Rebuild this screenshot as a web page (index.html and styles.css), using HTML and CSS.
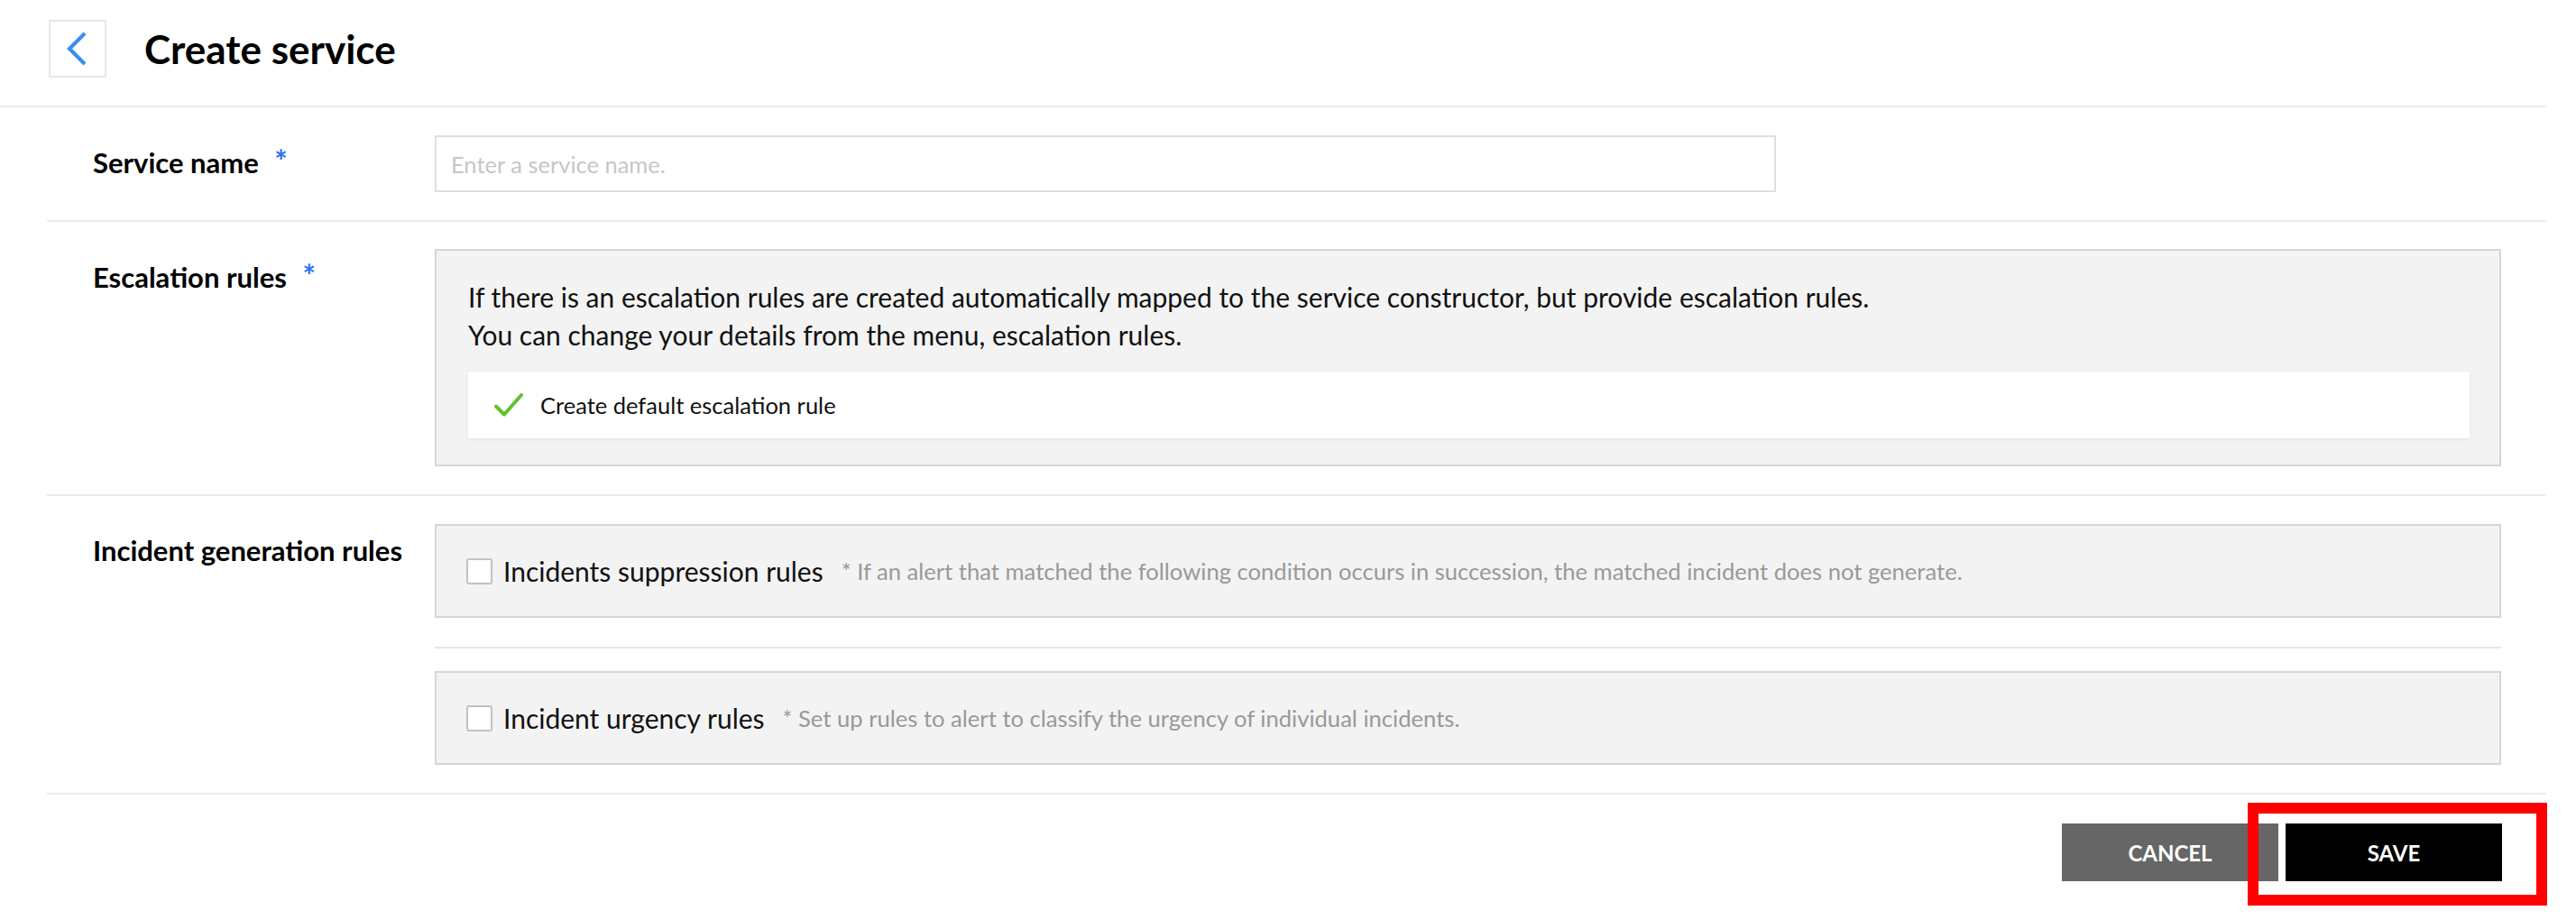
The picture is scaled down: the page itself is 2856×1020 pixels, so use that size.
FILE: index.html
```html
<!DOCTYPE html>
<html lang="en">
<head>
<meta charset="utf-8">
<title>Create service</title>
<link rel="stylesheet" href="styles.css">
</head>
<body>
<header class="topbar">
  <button class="back" type="button" aria-label="Back">
    <svg width="24" height="38" viewBox="0 0 24 38"><polyline points="21,2 4,19 21,36" fill="none" stroke="#3a8ef2" stroke-width="4.2" stroke-linecap="butt" stroke-linejoin="miter"/></svg>
  </button>
  <h1 class="title">Create service</h1>
</header>

<main class="form">
  <section class="row row-name">
    <div class="label">Service name <span class="req">*</span></div>
    <div class="field">
      <input class="text-input" type="text" placeholder="Enter a service name.">
    </div>
  </section>

  <section class="row row-esc">
    <div class="label">Escalation rules <span class="req">*</span></div>
    <div class="field grow">
      <div class="box box-esc">
        <p class="desc">If there is an escalation rules are created automatically mapped to the service constructor, but provide escalation rules.<br>You can change your details from the menu, escalation rules.</p>
        <div class="card">
          <svg class="check" width="32" height="26" viewBox="0 0 32 26"><path d="M2 14.5 L11 23.5 L30 2" fill="none" stroke="#63c22a" stroke-width="4" stroke-linecap="round" stroke-linejoin="round"/></svg>
          <span class="card-text">Create default escalation rule</span>
        </div>
      </div>
    </div>
  </section>

  <section class="row row-inc">
    <div class="label">Incident generation rules</div>
    <div class="field grow">
      <div class="box box-rule">
        <span class="checkbox"></span>
        <span class="rule-name">Incidents suppression rules</span>
        <span class="hint">* If an alert that matched the following condition occurs in succession, the matched incident does not generate.</span>
      </div>
      <div class="sub-sep"></div>
      <div class="box box-rule">
        <span class="checkbox"></span>
        <span class="rule-name">Incident urgency rules</span>
        <span class="hint">* Set up rules to alert to classify the urgency of individual incidents.</span>
      </div>
    </div>
  </section>
</main>

<footer class="actions">
  <button class="btn btn-cancel" type="button">CANCEL</button>
  <button class="btn btn-save" type="button">SAVE</button>
</footer>

<div class="highlight"></div>
</body>
</html>
```

FILE: styles.css
```css
* { box-sizing: border-box; }

html, body {
  margin: 0;
  padding: 0;
  background: #fff;
}

body {
  font-family: Lato, "Noto Sans", sans-serif;
  color: #111;
  width: 2856px;
  height: 1020px;
  overflow: hidden;
}

.topbar {
  display: flex;
  align-items: flex-start;
  height: 119px;
  padding: 22px 0 0 54px;
  margin-right: 33px;
  border-bottom: 2px solid #ececec;
}

.back {
  width: 64px;
  height: 64px;
  padding: 0;
  border: 2px solid #e6e6e6;
  background: #fff;
  display: flex;
  align-items: center;
  justify-content: center;
  cursor: pointer;
}

.back svg { display: block; margin-left: -2px; }

.title {
  margin: 0 0 0 42px;
  font-size: 44px;
  line-height: 64px;
  font-weight: 700;
  color: #000;
}

.form {
  padding: 0 33px 0 52px;
}

.row {
  display: flex;
  align-items: flex-start;
  border-bottom: 2px solid #ececec;
}

.row-name { padding: 31px 0 31px 0; }
.row-esc { padding: 30px 0 31px 0; }
.row-inc { padding: 31px 0 31px 0; }

.label {
  flex: 0 0 430px;
  padding: 9px 0 0 51px;
  font-size: 31px;
  line-height: 40px;
  font-weight: 700;
  color: #000;
  white-space: nowrap;
}

.row-name .label { padding-top: 8px; }

.req {
  color: #2f6ff0;
  margin-left: 10px;
  font-size: 34px;
  vertical-align: 1px;
}

.field { display: block; }
.field.grow { flex: 1; margin-right: 50px; }

.text-input {
  display: block;
  width: 1487px;
  height: 63px;
  border: 2px solid #dedede;
  padding: 0 16px;
  font-family: Lato, "Noto Sans", sans-serif;
  font-size: 25.5px;
  color: #111;
  background: #fff;
  outline: none;
}

.text-input::placeholder { color: #c6c6c6; }

.box {
  border: 2px solid #d6d6d6;
  background: #f3f3f3;
}

.box-esc {
  padding: 30px 33px 29px 35px;
}

.desc {
  margin: 0;
  font-size: 30px;
  line-height: 42px;
  color: #111;
}

.card {
  margin-top: 20px;
  height: 74px;
  background: #fff;
  display: flex;
  align-items: center;
  padding-left: 29px;
  box-shadow: 0 1px 4px rgba(0, 0, 0, 0.07);
}

.check { display: block; flex: none; }

.card-text {
  margin-left: 19px;
  font-size: 25.5px;
  color: #111;
}

.box-rule {
  height: 104px;
  display: flex;
  align-items: center;
  padding-left: 33px;
}

.checkbox {
  flex: none;
  width: 29px;
  height: 29px;
  border: 2px solid #c2c2c2;
  border-radius: 3px;
  background: #fff;
}

.rule-name {
  margin-left: 12px;
  font-size: 30px;
  color: #111;
  white-space: nowrap;
}

.hint {
  margin-left: 20px;
  font-size: 25.6px;
  color: #999;
  white-space: nowrap;
}

.sub-sep {
  height: 2px;
  background: #e6e6e6;
  margin: 32px 0 25px 0;
}

.actions {
  display: flex;
  justify-content: flex-end;
  gap: 8px;
  padding: 32px 82px 0 0;
}

.btn {
  width: 240px;
  height: 64px;
  border: none;
  color: #fff;
  font-family: Lato, "Noto Sans", sans-serif;
  font-size: 24px;
  font-weight: 700;
  cursor: pointer;
}

.btn-cancel { background: #666; }
.btn-save { background: #000; }

.highlight {
  position: absolute;
  left: 2492px;
  top: 890px;
  width: 332px;
  height: 114px;
  border: 12px solid #ff0000;
  pointer-events: none;
}
```
